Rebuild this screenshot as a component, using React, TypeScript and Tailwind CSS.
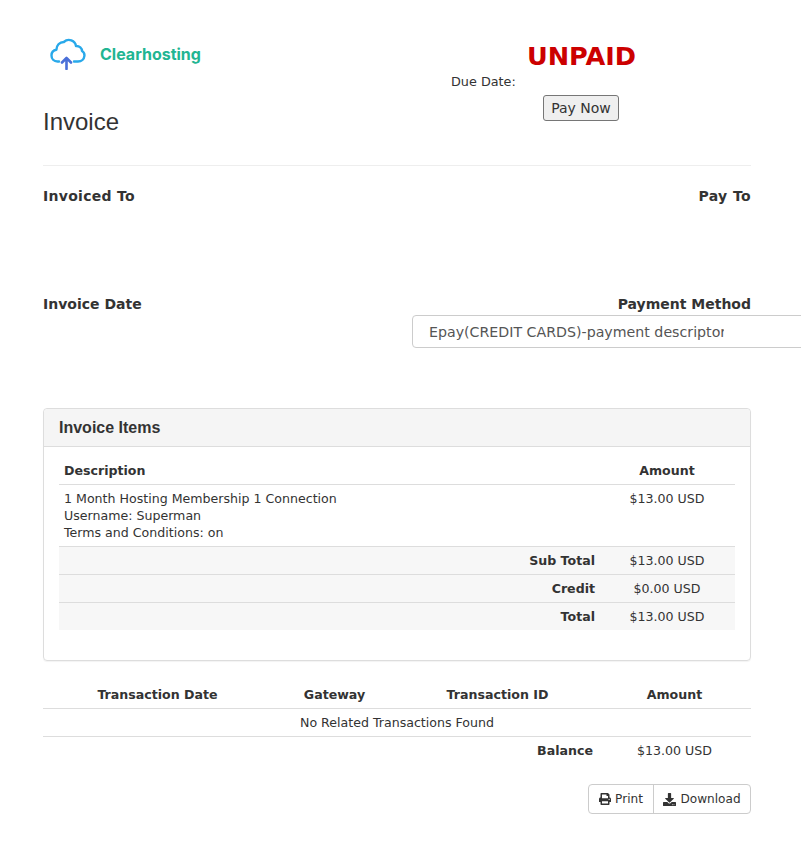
import React from 'react';
import { FaPrint, FaDownload } from 'react-icons/fa';

const CloudLogo = () => (
  <svg width="36" height="32" viewBox="0 0 36 32" fill="none">
    <path
      d="M9 23.5H7.5C3.8 23.5 1.5 20.8 1.5 17.5C1.5 14.5 3.6 12.2 6.4 11.8C6.4 7.5 9.5 4 13.8 4C16 2 19 1.5 21.3 2.4C24 3.4 25.6 5.6 26 8C29.5 7.8 32 10.2 32 13C33.8 14 34.6 15.8 34.4 17.8C34.1 20.9 31.6 23.5 28 23.5H24"
      stroke="#29a9ea"
      strokeWidth="2.4"
      strokeLinecap="round"
      strokeLinejoin="round"
    />
    <path d="M16.5 31V20M12 24.5L16.5 20L21 24.5" stroke="#4a6fd8" strokeWidth="2.6" strokeLinecap="round" strokeLinejoin="round" />
  </svg>
);

const totals = [
  { label: 'Sub Total', value: '$13.00 USD' },
  { label: 'Credit', value: '$0.00 USD' },
  { label: 'Total', value: '$13.00 USD' },
];

export default function App() {
  return (
    <div className="w-[801px] h-[857px] overflow-hidden bg-white pl-[43px] pr-[50px] text-[12.6px] leading-[17px] text-[#333] font-['DejaVu_Sans',Verdana,sans-serif]">
      {/* Header */}
      <div className="flex justify-between h-[166px] border-b border-[#eeeeee]">
        <div className="pt-[35px]">
          <div className="flex items-center h-[38px] pl-[7px] gap-[14px]">
            <CloudLogo />
            <span className="text-[16px] font-bold text-[#22b592] font-['Inter',sans-serif]">Clearhosting</span>
          </div>
          <h1 className="mt-[35px] text-[24px] leading-[28px] text-[#333] font-['Liberation_Sans',Arial,sans-serif]">Invoice</h1>
        </div>
        <div className="w-[339px] pt-[41px]">
          <div className="text-center text-[25.6px] leading-[30px] font-bold text-[#cc0000]">UNPAID</div>
          <div className="pl-[39px] text-[12.8px] leading-[17px] mt-[2px]">Due Date:</div>
          <div className="flex justify-center mt-[5px] pr-[1px]">
            <button className="h-[26px] w-[76px] rounded-[3px] border border-[#767676] bg-[#efefef] text-[14px] text-[#333]">Pay Now</button>
          </div>
        </div>
      </div>

      {/* Addresses */}
      <div className="flex justify-between pt-[21px] h-[129px] text-[14px] leading-[18px] font-bold">
        <span className="tracking-[0.3px]">Invoiced To</span>
        <span className="tracking-[0.4px]">Pay To</span>
      </div>

      {/* Date and method */}
      <div className="flex justify-between h-[113px] text-[14px] leading-[18px] font-bold">
        <span>Invoice Date</span>
        <div className="w-[339px]">
          <div className="text-right">Payment Method</div>
          <div className="mt-[2px] w-[420px] h-[33px] rounded-l-[4px] border border-[#cccccc] pl-[16px] flex items-center font-normal text-[14.2px] text-[#555]">
            <span className="block w-[295px] overflow-hidden whitespace-nowrap">Epay(CREDIT CARDS)-payment descriptor</span>
          </div>
        </div>
      </div>

      {/* Invoice items */}
      <div className="h-[253px] rounded-[4px] border border-[#dddddd] shadow-[0_1px_1px_rgba(0,0,0,0.05)]">
        <div className="h-[38px] flex items-center px-[15px] bg-[#f5f5f5] border-b border-[#dddddd] rounded-t-[4px] text-[16px] font-bold text-[#333] font-['Liberation_Sans',Arial,sans-serif]">
          Invoice Items
        </div>
        <div className="px-[15px] pt-[15px]">
          <div className="grid grid-cols-[1fr_136px] h-[23px] border-b border-[#dddddd] font-bold">
            <div className="pl-[5px]">Description</div>
            <div className="text-center">Amount</div>
          </div>
          <div className="grid grid-cols-[1fr_136px] h-[62px] pt-[5px] border-b border-[#dddddd]">
            <div className="pl-[5px]">
              <div>1 Month Hosting Membership 1 Connection</div>
              <div>Username: Superman</div>
              <div>Terms and Conditions: on</div>
            </div>
            <div className="text-center">$13.00 USD</div>
          </div>
          {totals.map((row, i) => (
            <div
              key={row.label}
              className={
                i < 2
                  ? 'grid grid-cols-[1fr_136px] h-[28px] items-center bg-[#f7f7f7] border-b border-[#dddddd]'
                  : 'grid grid-cols-[1fr_136px] h-[27px] pb-[1px] items-center bg-[#f7f7f7]'
              }
            >
              <div className="text-right pr-[4px] font-bold">{row.label}</div>
              <div className="text-center">{row.value}</div>
            </div>
          ))}
        </div>
      </div>

      {/* Transactions */}
      <div className="mt-[20px]">
        <div className="grid grid-cols-[229px_125px_201px_153px] h-[28px] items-center border-b border-[#dddddd] font-bold text-center">
          <div>Transaction Date</div>
          <div>Gateway</div>
          <div>Transaction ID</div>
          <div>Amount</div>
        </div>
        <div className="h-[28px] flex items-center justify-center border-b border-[#dddddd]">No Related Transactions Found</div>
        <div className="grid grid-cols-[1fr_153px] h-[27px] items-center">
          <div className="text-right pr-[5px] font-bold">Balance</div>
          <div className="text-center">$13.00 USD</div>
        </div>
      </div>

      {/* Actions */}
      <div className="flex justify-end mt-[20px]">
        <div className="flex h-[30px] rounded-[4px] border border-[#cccccc] text-[12.1px]">
          <button className="w-[65px] flex items-center justify-center gap-[4px] border-r border-[#cccccc]">
            <FaPrint size={12} />
            Print
          </button>
          <button className="w-[96px] flex items-center justify-center gap-[4px]">
            <FaDownload size={13} />
            Download
          </button>
        </div>
      </div>
    </div>
  );
}
